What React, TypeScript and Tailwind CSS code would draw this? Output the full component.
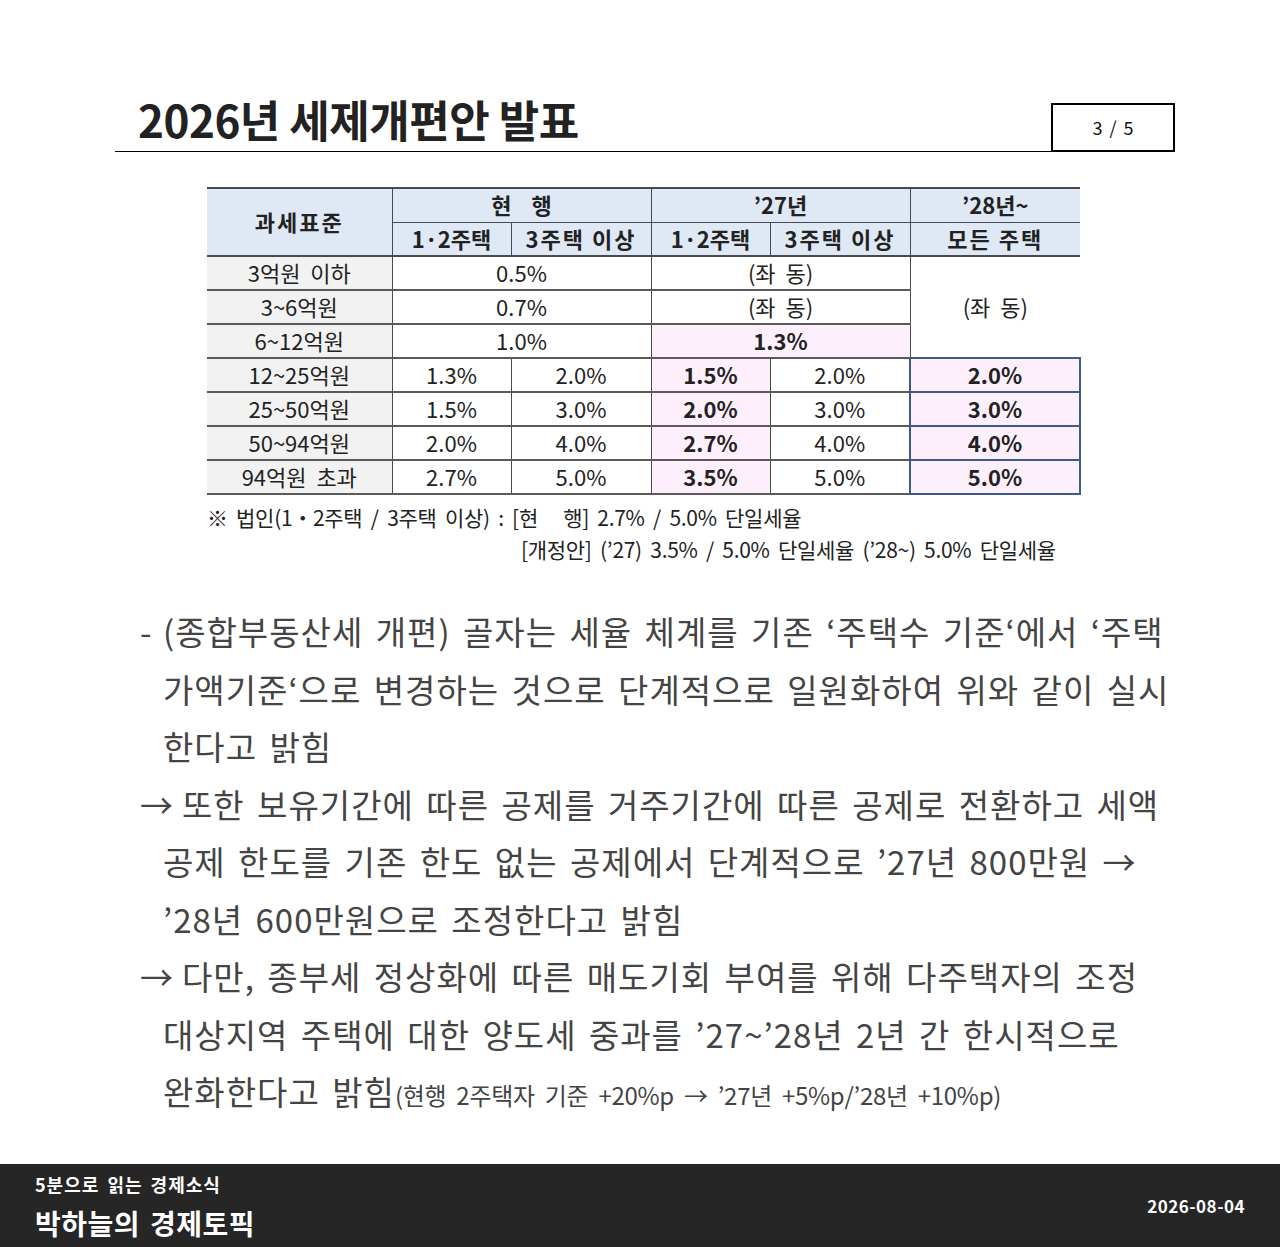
const KR = "font-['Noto_Sans_CJK_KR','Noto_Sans',sans-serif]";

const headBg = "bg-[#dfe8f5]";
const colBg = "bg-[#f2f2f2]";
const pink = "bg-[#fdf0fc]";

type Row = {
  label: string;
  cells: { text: string; span?: number; bold?: boolean; pink?: boolean; blue?: boolean }[];
};

const rows: Row[] = [
  { label: "3억원  이하", cells: [{ text: "0.5%", span: 2 }, { text: "(좌  동)", span: 2 }] },
  { label: "3~6억원", cells: [{ text: "0.7%", span: 2 }, { text: "(좌  동)", span: 2 }] },
  { label: "6~12억원", cells: [{ text: "1.0%", span: 2 }, { text: "1.3%", span: 2, bold: true, pink: true }] },
  {
    label: "12~25억원",
    cells: [
      { text: "1.3%" },
      { text: "2.0%" },
      { text: "1.5%", bold: true, pink: true },
      { text: "2.0%" },
      { text: "2.0%", bold: true, pink: true, blue: true },
    ],
  },
  {
    label: "25~50억원",
    cells: [
      { text: "1.5%" },
      { text: "3.0%" },
      { text: "2.0%", bold: true, pink: true },
      { text: "3.0%" },
      { text: "3.0%", bold: true, pink: true, blue: true },
    ],
  },
  {
    label: "50~94억원",
    cells: [
      { text: "2.0%" },
      { text: "4.0%" },
      { text: "2.7%", bold: true, pink: true },
      { text: "4.0%" },
      { text: "4.0%", bold: true, pink: true, blue: true },
    ],
  },
  {
    label: "94억원  초과",
    cells: [
      { text: "2.7%" },
      { text: "5.0%" },
      { text: "3.5%", bold: true, pink: true },
      { text: "5.0%" },
      { text: "5.0%", bold: true, pink: true, blue: true },
    ],
  },
];

function TaxTable() {
  return (
    <table className={`w-[873px] table-fixed border-collapse text-[22px] text-[#222] ${KR}`}>
      <colgroup>
        <col className="w-[185px]" />
        <col className="w-[119px]" />
        <col className="w-[140px]" />
        <col className="w-[119px]" />
        <col className="w-[140px]" />
        <col className="w-[170px]" />
      </colgroup>
      <thead>
        <tr className={`h-[34px] ${headBg} border-t-2 border-[#4a4a4a]`}>
          <th rowSpan={2} className="border-r border-b-2 border-[#4a4a4a] pb-[2px] font-bold tracking-[2px] leading-none">
            과세표준
          </th>
          <th colSpan={2} className="border-r border-b border-[#4a4a4a] pb-[3px] font-bold leading-none whitespace-pre">
            현    행
          </th>
          <th colSpan={2} className="border-r border-b border-[#4a4a4a] pb-[3px] font-bold leading-none">
            ’27년
          </th>
          <th className="border-b border-[#4a4a4a] pb-[3px] font-bold leading-none">’28년~</th>
        </tr>
        <tr className={`h-[34px] ${headBg}`}>
          <th className="border-r border-b-2 border-[#4a4a4a] pb-[2px] font-bold leading-none">1·2주택</th>
          <th className="border-r border-b-2 border-[#4a4a4a] pb-[2px] font-bold leading-none tracking-[2px]">3주택 이상</th>
          <th className="border-r border-b-2 border-[#4a4a4a] pb-[2px] font-bold leading-none">1·2주택</th>
          <th className="border-r border-b-2 border-[#4a4a4a] pb-[2px] font-bold leading-none tracking-[2px]">3주택 이상</th>
          <th className="border-b-2 border-[#4a4a4a] pb-[2px] font-bold leading-none tracking-[2px]">모든 주택</th>
        </tr>
      </thead>
      <tbody>
        {rows.map((r, i) => (
          <tr key={r.label} className="h-[34px] border-b-2 border-[#5a5a5a]">
            <td className={`${colBg} border-r border-[#4a4a4a] pb-[3px] text-center leading-none whitespace-pre`}>{r.label}</td>
            {r.cells.map((c, j) => (
              <td
                key={j}
                colSpan={c.span}
                className={[
                  "pb-[3px] text-center leading-none whitespace-pre",
                  c.bold ? "font-bold" : "",
                  c.pink ? pink : "",
                  c.blue ? "border-2 border-[#3d5a8a]" : "border-r border-[#4a4a4a]",
                ].join(" ")}
              >
                {c.text}
              </td>
            ))}
            {i === 0 && (
              <td rowSpan={3} className="border-b-2 border-[#3d5a8a] pb-[3px] text-center leading-none whitespace-pre">
                (좌  동)
              </td>
            )}
          </tr>
        ))}
      </tbody>
    </table>
  );
}

const lines: { lead: string; text: React.ReactNode }[][] = [
  [
    { lead: "-", text: "(종합부동산세 개편) 골자는 세율 체계를 기존 ‘주택수 기준‘에서 ‘주택" },
    { lead: "", text: "가액기준‘으로 변경하는 것으로 단계적으로 일원화하여 위와 같이 실시" },
    { lead: "", text: "한다고 밝힘" },
  ],
  [
    { lead: "→", text: "또한 보유기간에 따른 공제를 거주기간에 따른 공제로 전환하고 세액" },
    { lead: "", text: "공제 한도를 기존 한도 없는 공제에서 단계적으로 ’27년 800만원 →" },
    { lead: "", text: "’28년 600만원으로 조정한다고 밝힘" },
  ],
  [
    { lead: "→", text: "다만, 종부세 정상화에 따른 매도기회 부여를 위해 다주택자의 조정" },
    { lead: "", text: "대상지역 주택에 대한 양도세 중과를 ’27~’28년 2년 간 한시적으로" },
    {
      lead: "",
      text: (
        <>
          완화한다고 밝힘
          <span className="text-[24px] tracking-[-0.3px] [word-spacing:5px]">
            (현행 2주택자 기준 +20%p → ’27년 +5%p/’28년 +10%p)
          </span>
        </>
      ),
    },
  ],
];

export default function App() {
  return (
    <div className={`flex min-h-[1247px] w-[1280px] flex-col bg-white ${KR}`}>
      <div className="pt-[97px] pr-[105px] pl-[115px]">
        {/* title bar */}
        <div className="flex items-end justify-between border-b border-black">
          <h1 className="mb-[10px] pl-[23px] text-[44px] font-bold leading-[44px] tracking-[-0.5px] text-[#222]">
            2026년 세제개편안 발표
          </h1>
          <div className="mb-[-1px] flex h-[49px] w-[124px] items-center justify-center border-2 border-black text-[18px] text-[#111] [word-spacing:3px]">
            3 / 5
          </div>
        </div>

        {/* table */}
        <div className="mt-[35px] pl-[92px]">
          <TaxTable />
          <div className="mt-[6px] text-[21px] leading-[32px] tracking-[-0.3px] text-[#222] [word-spacing:4px]">
            <p className="whitespace-pre">※ 법인(1・2주택 / 3주택 이상) : [현   행] 2.7% / 5.0% 단일세율</p>
            <p className="whitespace-pre pl-[314px]">[개정안] (’27) 3.5% / 5.0% 단일세율 (’28~) 5.0% 단일세율</p>
          </div>
        </div>

        {/* body */}
        <div className="mt-[38px] pl-[25px] text-[33px] leading-[57.5px] tracking-[1px] text-[#444] [word-spacing:4px]">
          {lines.map((para, pi) => (
            <div key={pi}>
              {para.map((l, li) => (
                <div key={li} className="flex whitespace-nowrap">
                  {l.lead ? (
                    <span className={l.lead === "→" ? "w-[42px]" : "w-[23px]"}>{l.lead}</span>
                  ) : (
                    <span className="w-[23px]" />
                  )}
                  <span>{l.text}</span>
                </div>
              ))}
            </div>
          ))}
        </div>
      </div>

      {/* footer */}
      <footer className="mt-auto flex h-[83px] items-center justify-between bg-[#262626] px-[35px] text-white">
        <div className="flex flex-col">
          <span className="text-[18px] font-bold leading-[24px] tracking-[1px] [word-spacing:3px]">5분으로 읽는 경제소식</span>
          <span className="mt-[10px] text-[28px] font-bold leading-[34px] tracking-[0.5px] [word-spacing:3px]">박하늘의 경제토픽</span>
        </div>
        <span className="text-[17px] font-bold tracking-[0.5px]">2026-08-04</span>
      </footer>
    </div>
  );
}
